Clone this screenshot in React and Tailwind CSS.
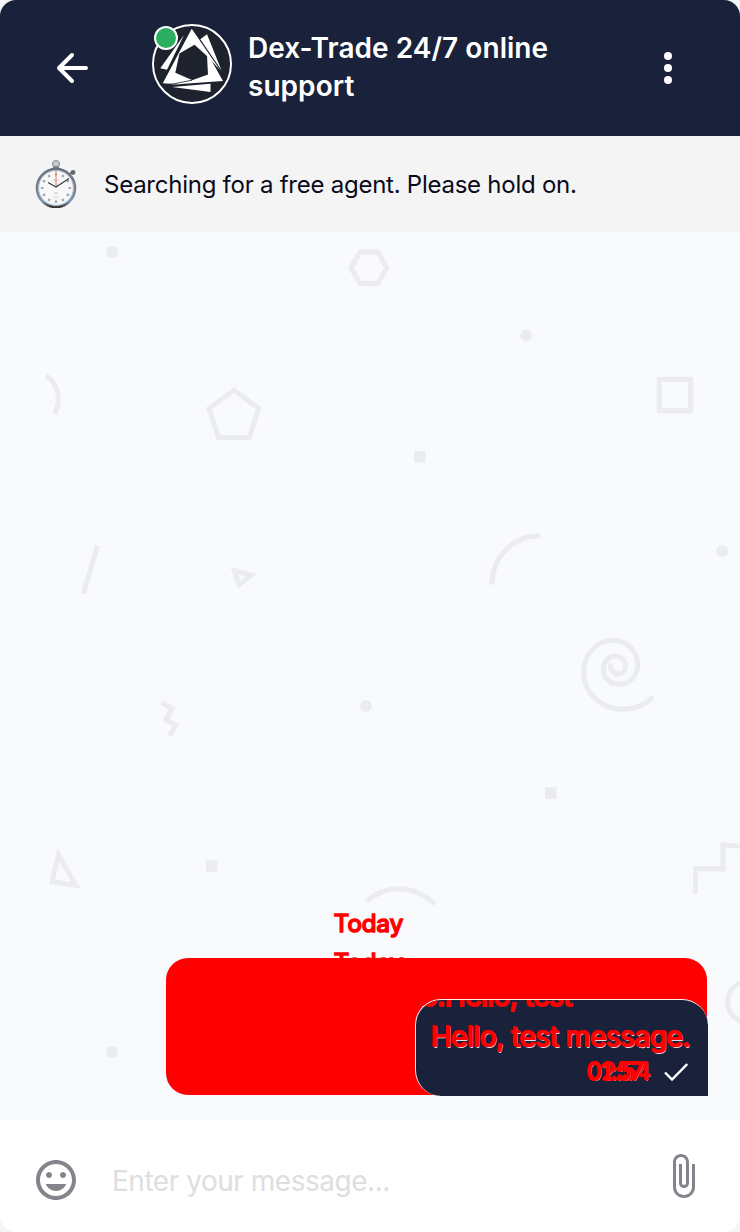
function Avatar() {
  return (
    <svg className="block h-20 w-20" viewBox="152 24 80 80">
      <circle cx="192" cy="64" r="39" fill="#1e222d" stroke="#fff" strokeWidth="2" />
      <g fill="#fff">
        <path d="M184 35L160.3 68.2L167 69.7Z" />
        <path d="M207 34.3L200.3 39.3L221.5 70.5Z" />
        <path d="M172 87L210.5 92L210.5 83.8Z" />
        <path d="M191.7 28.7L162.8 83.3L180 84.2L192 80L175.3 72.7L179.5 53.5L194.5 44.8L207 56L221 71Z" />
        <path d="M207 56L209.5 57L223 81L170 84.8L192 80.3L208 74.5Z" />
      </g>
      <path d="M192 80.2L170 84.6M200.3 40.5L221 70.5" fill="none" stroke="#1e222d" strokeWidth="0.8" />
    </svg>
  );
}

function Header() {
  return (
    <header className="flex h-[136px] shrink-0 bg-[#19223a]">
      <button className="ml-12 mt-12 h-10 w-12" aria-label="Back">
        <svg className="block h-10 w-12" viewBox="48 48 48 40" fill="none" stroke="#fff" strokeWidth="4" strokeLinecap="round" strokeLinejoin="round">
          <path d="M86 68H59M72 55L59 68L72 81" />
        </svg>
      </button>
      <div className="relative ml-14 mt-6 h-20 w-20">
        <Avatar />
        <span className="absolute left-0.5 top-0.5 h-6 w-6 rounded-full border-2 border-white bg-[#2aae5f]" />
      </div>
      <h1 className="ml-4 mt-[29px] w-[350px] text-[28px] font-semibold leading-[38px] tracking-[0.04px] text-white">
        Dex-Trade 24/7 online support
      </h1>
      <button className="ml-12 mt-12 h-10 w-12" aria-label="Menu">
        <svg className="block h-10 w-12" viewBox="646 48 48 40" fill="#fff">
          <circle cx="668" cy="56" r="4" />
          <circle cx="668" cy="68" r="4" />
          <circle cx="668" cy="80" r="4" />
        </svg>
      </button>
    </header>
  );
}

function Stopwatch() {
  const ticks = Array.from({ length: 12 }, (_, i) => i * 30);
  return (
    <svg className="h-12 w-12" viewBox="32 160 48 48">
      <defs>
        <linearGradient id="rim" x1="0" y1="0" x2="0" y2="1">
          <stop offset="0" stopColor="#66717d" />
          <stop offset="0.5" stopColor="#7b7d82" />
          <stop offset="0.85" stopColor="#6f92b8" />
          <stop offset="1" stopColor="#3b3532" />
        </linearGradient>
      </defs>
      <circle cx="56" cy="164" r="3.6" fill="#c4c8cb" stroke="#8c9194" />
      <path d="M53 166h6v3h-6z" fill="#7e8488" />
      <path d="M69 175l4-4" stroke="#66717b" strokeWidth="2" />
      <circle cx="73" cy="172.5" r="2.4" fill="#626b73" />
      <circle cx="56" cy="188" r="19" fill="#f8f8f9" stroke="url(#rim)" strokeWidth="2.6" />
      <circle cx="56" cy="188" r="17.4" fill="none" stroke="#a9bccd" strokeWidth="1" />
      {ticks.map((a) => (
        <path key={a} d="M56 173v2.5" stroke="#a3a4a7" strokeWidth="2.2" transform={`rotate(${a} 56 188)`} />
      ))}
      <path d="M53 180h6M54 193h4M54 197h4" stroke="#c7c7c9" strokeWidth="1" />
      <path d="M56 171v17" stroke="#ee9479" strokeWidth="1.4" />
      <path d="M48 182.5l8 4.5M56 187l13-8.5" stroke="#35404c" strokeWidth="1.3" />
    </svg>
  );
}

function Pattern() {
  return (
    <svg className="absolute inset-0 h-full w-full" viewBox="0 232 740 888" fill="none" stroke="#ebecee" strokeWidth="5">
      <g fill="#ebecee" stroke="none">
        <circle cx="112.3" cy="252" r="6" />
        <circle cx="526.3" cy="335.3" r="6" />
        <circle cx="722" cy="551" r="6" />
        <circle cx="366" cy="706" r="6" />
        <circle cx="112.3" cy="1052" r="6" />
        <rect x="414" y="451" width="11.5" height="11.5" />
        <rect x="545" y="787.3" width="11.5" height="11.5" />
        <rect x="206" y="860.3" width="11.5" height="11.5" />
      </g>
      <path d="M351 267.8L360 252H378L387 267.8L378 283.5H360Z" />
      <path d="M234 390L258.5 408.5L249.5 437.5H218.5L209 408.5Z" />
      <rect x="659.3" y="379.3" width="31.4" height="31.4" />
      <path d="M46 375.5C59 385 61.5 400 55 414" />
      <path d="M492 584.5C492 557 513 536 540 535.5" />
      <path d="M97.5 545.5L83.5 593.8" />
      <path d="M234.2 570.3L251 575.2L239 584.5Z" />
      <path d="M161.7 702.7L172.3 708.7L165.7 719.7L176 725L169.5 735.7" />
      <path d="M58.4 854.5L76 885.2L52 881.8Z" />
      <path d="M366 901.5C386 884 414 884 434.5 904" />
      <path d="M695.3 894L695.8 868.5L723 869V845L740 846" />
      <circle cx="748" cy="1002" r="20.5" />
      <path d="M611 663.5C609 669 613 674 618.3 674C623 674 625.5 670 625.5 665.7C625 660 620.5 656 614.7 656C608 656 603.3 662 603.3 669.3C603.5 678 610 684.3 619.3 684.3C630 684.3 638 675 637.7 664C637 650 626 640.3 612.7 640.3C596 640.3 583.7 655 583.7 672.7C584 693 601 709.3 622.7 709.3C634 709.3 645 705 653 697" />
    </svg>
  );
}

function Day() {
  return (
    <span className="text-[24px] leading-8 text-[#ff0000] [-webkit-text-stroke:1.7px_#ff0000]">Today</span>
  );
}

function Conversation() {
  return (
    <main className="relative flex h-[888px] shrink-0 flex-col overflow-hidden bg-[#f9fafc]">
      <Pattern />
      <div className="relative mt-[676px] flex h-[39px] flex-col items-center pr-[3px]">
        <Day />
      </div>
      <div className="relative flex h-[11px] flex-col items-center overflow-hidden pr-[3px]">
        <Day />
      </div>
      <section className="relative ml-[166px] mr-8 flex h-[138px] flex-col">
        <div className="absolute bottom-px left-0 right-px top-0 rounded-l-[22px] rounded-tr-[22px] bg-[#ff0000]" />
        <article className="relative ml-[249px] mt-[41px] flex h-[97px] w-[293px] flex-col overflow-hidden rounded-bl-[26px] rounded-tl-[26px] rounded-tr-[26px] border-l border-t border-[#f7eef0] bg-[#19223a]">
          <div className="absolute -top-[20px] left-[5px] whitespace-nowrap text-[28px] leading-8 tracking-[-0.5px] text-[#ff0000] [-webkit-text-stroke:2px_#ff0000]">
            o.Hello, test
          </div>
          <p className="mt-[21px] whitespace-nowrap pl-[15px] text-[28px] leading-8 tracking-[-0.45px] text-[#ff0000] [text-shadow:-1px_0_#ff0000,0_-1px_#ff0000,-1px_-1px_#ff0000,1px_0_#ff0000,1px_1px_0_#d8dbe1]">
            Hello, test message.
          </p>
          <div className="mt-[3px] flex items-center justify-end gap-3.5 pr-5">
            <span className="grid text-[24px] leading-8 tracking-[-0.7px] text-[#ff0000] [text-shadow:-1px_0_#ff0000,0_-1px_#ff0000,1px_0_#ff0000,0_1px_#ff0000,1px_1px_0_#8e939f]">
              <time className="col-start-1 row-start-1">02:54</time>
              <time className="col-start-1 row-start-1">01:57</time>
            </span>
            <svg className="h-5 w-6" viewBox="664 1062 24 20" fill="none" stroke="#fff" strokeWidth="2.4">
              <path d="M665 1072.5L672 1079.5L687.2 1064" />
            </svg>
          </div>
        </article>
      </section>
    </main>
  );
}

function Composer() {
  return (
    <footer className="flex h-28 shrink-0 items-center bg-white pt-2">
      <svg className="ml-8 h-12 w-12" viewBox="0 0 24 24" fill="#84848d">
        <path d="M11.99 2C6.47 2 2 6.48 2 12s4.47 10 9.99 10C17.52 22 22 17.52 22 12S17.52 2 11.99 2zM12 20c-4.42 0-8-3.58-8-8s3.58-8 8-8 8 3.58 8 8-3.58 8-8 8zm3.5-9c.83 0 1.5-.67 1.5-1.5S16.33 8 15.5 8 14 8.67 14 9.5s.67 1.5 1.5 1.5zm-7 0c.83 0 1.5-.67 1.5-1.5S9.33 8 8.5 8 7 8.67 7 9.5 7.67 11 8.5 11zm3.5 6.5c2.33 0 4.31-1.46 5.11-3.5H6.89c.8 2.04 2.78 3.5 5.11 3.5z" />
      </svg>
      <p className="ml-8 flex-1 pt-0.5 text-[28px] leading-9 tracking-[-0.47px] text-[#dedede]">Enter your message...</p>
      <svg className="mb-2 mr-[33px] h-12 w-12" viewBox="0 0 24 24" fill="#84848d">
        <path d="M16.5 6v11.5c0 2.21-1.79 4-4 4s-4-1.79-4-4V5c0-1.38 1.12-2.5 2.5-2.5s2.5 1.12 2.5 2.5v10.5c0 .55-.45 1-1 1s-1-.45-1-1V6H10v9.5c0 1.38 1.12 2.5 2.5 2.5s2.5-1.12 2.5-2.5V5c0-2.21-1.79-4-4-4S7 2.79 7 5v12.5c0 3.04 2.46 5.5 5.5 5.5s5.5-2.46 5.5-5.5V6h-1.5z" />
      </svg>
    </footer>
  );
}

export default function App() {
  return (
    <div className="h-[1232px] w-[740px] bg-[#f5f5f5] font-['Inter',sans-serif]">
      <div className="flex h-full flex-col overflow-hidden rounded-2xl">
        <Header />
        <div className="flex h-24 shrink-0 items-center gap-6 bg-[#f4f4f4] pl-8">
          <Stopwatch />
          <p className="whitespace-nowrap pt-0.5 text-[24px] leading-8 tracking-[-0.25px] text-[#090b1b]">
            Searching for a free agent. Please hold on.
          </p>
        </div>
        <Conversation />
        <Composer />
      </div>
    </div>
  );
}
